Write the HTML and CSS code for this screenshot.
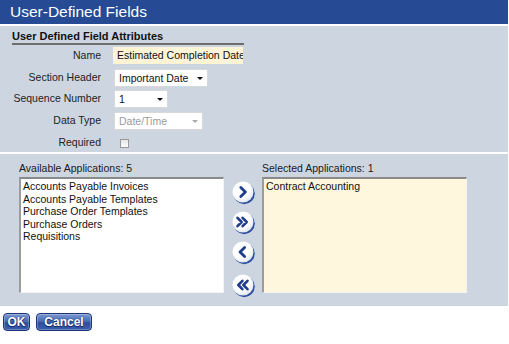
FILE: index.html
```html
<!DOCTYPE html>
<html>
<head>
<meta charset="utf-8">
<link rel="stylesheet" href="styles.css">
</head>
<body>
<div class="title">User-Defined Fields</div>
<div class="attrs">
  <div class="attrs-head">User Defined Field Attributes</div>
  <div class="form">
    <div class="lbl">Name</div>
    <div class="fld"><div class="input">Estimated Completion Date</div></div>
    <div class="lbl">Section Header</div>
    <div class="fld"><div class="sel w94">Important Date<span class="arr"></span></div></div>
    <div class="lbl">Sequence Number</div>
    <div class="fld"><div class="sel w54">1<span class="arr"></span></div></div>
    <div class="lbl">Data Type</div>
    <div class="fld"><div class="sel w89 dis">Date/Time<span class="arr"></span></div></div>
    <div class="lbl">Required</div>
    <div class="fld"><div class="chk"></div></div>
  </div>
</div>
<div class="apps">
  <div class="col">
    <div class="cap">Available Applications: 5</div>
    <div class="list">
      <div>Accounts Payable Invoices</div>
      <div>Accounts Payable Templates</div>
      <div>Purchase Order Templates</div>
      <div>Purchase Orders</div>
      <div>Requisitions</div>
    </div>
  </div>
  <div class="movers">
    <svg class="mv" width="24" height="24" viewBox="0 0 24 24"><defs><radialGradient id="g1" cx="0.4" cy="0.35" r="0.7"><stop offset="0.6" stop-color="#ffffff"/><stop offset="1" stop-color="#dde3ee"/></radialGradient></defs><circle cx="12.2" cy="12.6" r="10.6" fill="#2d4f9e"/><circle cx="11" cy="11" r="10.5" fill="url(#g1)"/><path d="M8.8 6.5 L13.4 11 L8.8 15.5" fill="none" stroke="#1f3d8c" stroke-width="2.8" stroke-linecap="round" stroke-linejoin="round"/></svg>
    <svg class="mv" width="24" height="24" viewBox="0 0 24 24"><circle cx="12.2" cy="12.6" r="10.6" fill="#2d4f9e"/><circle cx="11" cy="11" r="10.5" fill="url(#g1)"/><path d="M5.5 6.8 L9.6 11 L5.5 15.2 M10.6 6.8 L14.7 11 L10.6 15.2" fill="none" stroke="#1f3d8c" stroke-width="2.6" stroke-linecap="round" stroke-linejoin="round"/></svg>
    <svg class="mv" width="24" height="24" viewBox="0 0 24 24"><circle cx="12.2" cy="12.6" r="10.6" fill="#2d4f9e"/><circle cx="11" cy="11" r="10.5" fill="url(#g1)"/><path d="M12.6 6.5 L8 11 L12.6 15.5" fill="none" stroke="#1f3d8c" stroke-width="2.8" stroke-linecap="round" stroke-linejoin="round"/></svg>
    <svg class="mv last" width="24" height="24" viewBox="0 0 24 24"><circle cx="12.2" cy="12.6" r="10.6" fill="#2d4f9e"/><circle cx="11" cy="11" r="10.5" fill="url(#g1)"/><path d="M10.4 6.8 L6.3 11 L10.4 15.2 M15.5 6.8 L11.4 11 L15.5 15.2" fill="none" stroke="#1f3d8c" stroke-width="2.6" stroke-linecap="round" stroke-linejoin="round"/></svg>
  </div>
  <div class="col">
    <div class="cap">Selected Applications: 1</div>
    <div class="list sel-list">
      <div>Contract Accounting</div>
    </div>
  </div>
</div>
<div class="btns">
  <button class="btn ok">OK</button>
  <button class="btn cancel">Cancel</button>
</div>
</body>
</html>
```
FILE: styles.css
```css
body {
  margin: 0;
  width: 509px;
  font-family: "Liberation Sans", Arial, sans-serif;
  font-size: 10.5px;
  color: #1a1a1a;
  background: #ffffff;
}
.title {
  height: 24px;
  line-height: 24px;
  width: 508px;
  background: #264a93;
  color: #ffffff;
  font-size: 15.5px;
  padding-left: 10px;
  box-sizing: border-box;
}
.attrs {
  margin-top: 2px;
  width: 508px;
  height: 126px;
  background: #cdd5e1;
  box-sizing: border-box;
  padding: 4px 0 0 12px;
}
.attrs-head {
  width: 232px;
  font-size: 11px;
  font-weight: bold;
  line-height: 12px;
  padding-bottom: 1px;
  border-bottom: 2px solid #6e6e6e;
  color: #111;
}
.form {
  display: grid;
  grid-template-columns: 89px 130px;
  grid-auto-rows: 21.7px;
  column-gap: 12px;
  margin-top: 0;
}
.lbl {
  text-align: right;
  line-height: 21.7px;
  white-space: nowrap;
  color: #222;
}
.fld {
  display: flex;
  align-items: center;
}
.input {
  width: 130px;
  height: 17px;
  line-height: 17px;
  background: #fff4d6;
  padding-left: 4px;
  box-sizing: border-box;
  overflow: hidden;
  white-space: nowrap;
  color: #111;
}
.sel {
  position: relative;
  height: 18px;
  line-height: 17px;
  margin-left: 1px;
  background: #ffffff;
  border: 1px solid #d8d8d8;
  box-sizing: border-box;
  padding-left: 4px;
  white-space: nowrap;
  color: #111;
}
.w94 { width: 94px; }
.w54 { width: 54px; }
.w89 { width: 89px; }
.dis { color: #9a9a9a; }
.arr {
  position: absolute;
  right: 4px;
  top: 7px;
  width: 0;
  height: 0;
  border-left: 3px solid transparent;
  border-right: 3px solid transparent;
  border-top: 3px solid #111;
}
.dis .arr { border-top-color: #aaa; }
.chk {
  width: 9px;
  height: 9px;
  margin-left: 7px;
  margin-top: 1px;
  border: 1px solid #9a9a9a;
  background: linear-gradient(#e6e6e6, #fbfbfb);
  box-sizing: border-box;
}
.apps {
  margin-top: 2px;
  width: 508px;
  height: 152px;
  background: #cdd5e1;
  box-sizing: border-box;
  padding: 6px 0 0 19px;
  display: flex;
}
.col {
  display: flex;
  flex-direction: column;
  width: 205px;
}
.cap {
  line-height: 17px;
  color: #1a1a1a;
  white-space: nowrap;
}
.list {
  height: 116px;
  background: #ffffff;
  border-top: 2px solid #8a8a8a;
  border-left: 2px solid #9c9c9c;
  border-right: 1px solid #f4f4f4;
  border-bottom: 1px solid #f4f4f4;
  box-sizing: border-box;
  padding: 1px 0 0 2px;
  line-height: 12.5px;
  color: #111;
}
.sel-list {
  background: #fff7dd;
}
.movers {
  width: 38px;
  display: flex;
  flex-direction: column;
  align-items: center;
  padding-top: 21px;
  padding-left: 1px;
  box-sizing: border-box;
  gap: 6px;
}
.mv { display: block; }
.mv.last { margin-top: 3px; }
.btns {
  display: flex;
  gap: 6px;
  padding: 7px 0 0 3px;
}
.btn {
  height: 18px;
  padding: 0;
  border: 1px solid #1d3576;
  border-radius: 4px;
  background: linear-gradient(#7c98d2 0%, #4b6cb4 45%, #2d4f9e 55%, #3a5fae 100%);
  color: #ffffff;
  font-family: "Liberation Sans", Arial, sans-serif;
  font-weight: bold;
  font-size: 12px;
  text-shadow: 0 0 1px #0c2260, 0 1px 1px #0c2260;
  box-shadow: inset 0 0 0 1px rgba(255,255,255,0.25);
}
.ok { width: 27px; }
.cancel { width: 56px; }
```
